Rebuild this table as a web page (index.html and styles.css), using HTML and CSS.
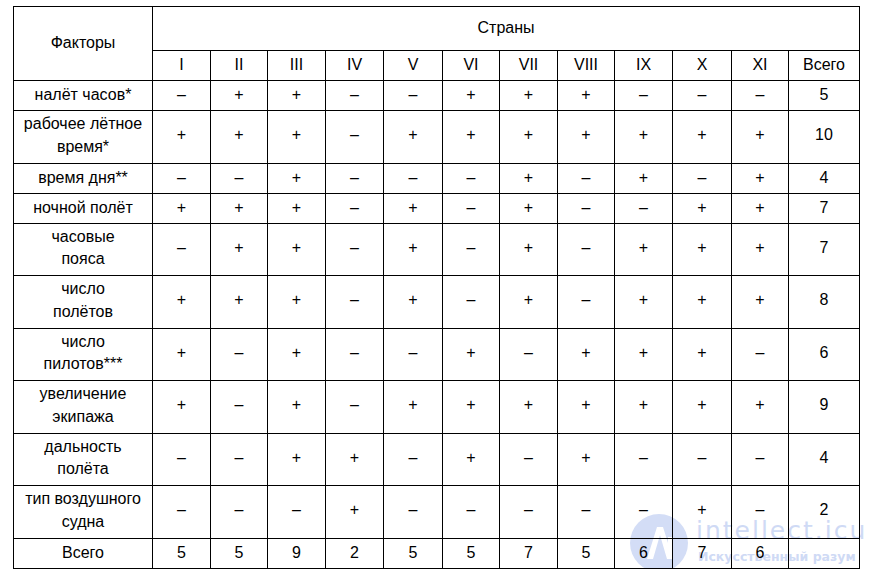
FILE: index.html
```html
<!DOCTYPE html>
<html lang="ru">
<head>
<meta charset="utf-8">
<title>Факторы</title>
<link rel="stylesheet" href="styles.css">
</head>
<body>
<div class="page">
  <table class="grid">
    <colgroup>
      <col class="c-f"><col class="c58"><col class="c57"><col class="c58"><col class="c58"><col class="c59"><col class="c57"><col class="c58"><col class="c57"><col class="c58"><col class="c59"><col class="c57"><col class="c-t">
    </colgroup>
    <thead>
      <tr class="h1"><th rowspan="2">Факторы</th><th colspan="12">Страны</th></tr>
      <tr class="r1"><th>I</th><th>II</th><th>III</th><th>IV</th><th>V</th><th>VI</th><th>VII</th><th>VIII</th><th>IX</th><th>X</th><th>XI</th><th>Всего</th></tr>
    </thead>
    <tbody>
      <tr class="r1"><td>налёт часов*</td><td>–</td><td>+</td><td>+</td><td>–</td><td>–</td><td>+</td><td>+</td><td>+</td><td>–</td><td>–</td><td>–</td><td>5</td></tr>
      <tr class="r2"><td>рабочее лётное время*</td><td>+</td><td>+</td><td>+</td><td>–</td><td>+</td><td>+</td><td>+</td><td>+</td><td>+</td><td>+</td><td>+</td><td>10</td></tr>
      <tr class="r1"><td>время дня**</td><td>–</td><td>–</td><td>+</td><td>–</td><td>–</td><td>–</td><td>+</td><td>–</td><td>+</td><td>–</td><td>+</td><td>4</td></tr>
      <tr class="r1"><td>ночной полёт</td><td>+</td><td>+</td><td>+</td><td>–</td><td>+</td><td>–</td><td>+</td><td>–</td><td>–</td><td>+</td><td>+</td><td>7</td></tr>
      <tr class="r2"><td>часовые<br>пояса</td><td>–</td><td>+</td><td>+</td><td>–</td><td>+</td><td>–</td><td>+</td><td>–</td><td>+</td><td>+</td><td>+</td><td>7</td></tr>
      <tr class="r2"><td>число<br>полётов</td><td>+</td><td>+</td><td>+</td><td>–</td><td>+</td><td>–</td><td>+</td><td>–</td><td>+</td><td>+</td><td>+</td><td>8</td></tr>
      <tr class="r2"><td>число<br>пилотов***</td><td>+</td><td>–</td><td>+</td><td>–</td><td>–</td><td>+</td><td>–</td><td>+</td><td>+</td><td>+</td><td>–</td><td>6</td></tr>
      <tr class="r2"><td>увеличение<br>экипажа</td><td>+</td><td>–</td><td>+</td><td>–</td><td>+</td><td>+</td><td>+</td><td>+</td><td>+</td><td>+</td><td>+</td><td>9</td></tr>
      <tr class="r2"><td>дальность<br>полёта</td><td>–</td><td>–</td><td>+</td><td>+</td><td>–</td><td>+</td><td>–</td><td>+</td><td>–</td><td>–</td><td>–</td><td>4</td></tr>
      <tr class="r2"><td>тип воздушного<br>судна</td><td>–</td><td>–</td><td>–</td><td>+</td><td>–</td><td>–</td><td>–</td><td>–</td><td>–</td><td>+</td><td>–</td><td>2</td></tr>
      <tr class="r1"><td>Всего</td><td>5</td><td>5</td><td>9</td><td>2</td><td>5</td><td>5</td><td>7</td><td>5</td><td>6</td><td>7</td><td>6</td><td></td></tr>
    </tbody>
  </table>
  <div class="watermark" aria-hidden="true">
    <svg class="wm-logo" width="58" height="60" viewBox="0 0 58 60">
      <circle cx="29" cy="30" r="29" fill="#d3ddf6"/>
      <path d="M17 46 L27 14 L33 14 L43 46 L37 46 L30 22 L23 46 Z" fill="#ffffff"/>
      <rect x="38" y="24" width="5" height="22" fill="#ffffff"/>
    </svg>
    <div class="wm-text">
      <span class="wm-big">intellect.icu</span>
      <span class="wm-small">Искусственный разум</span>
    </div>
  </div>
</div>
</body>
</html>
```
FILE: styles.css
```css
html, body {
  margin: 0;
  padding: 0;
  background: #ffffff;
}
.page {
  position: relative;
  padding: 6px 0 0 13px;
  font-family: "Liberation Sans", Arial, sans-serif;
  font-size: 16px;
  color: #000;
}
.grid {
  position: relative;
  z-index: 1;
  border-collapse: collapse;
  table-layout: fixed;
  width: 847px;
  background: transparent;
}
.c-f { width: 139px; }
.c57 { width: 57px; }
.c58 { width: 58px; }
.c59 { width: 59px; }
.c-t { width: 71px; }
.grid th, .grid td {
  border: 1px solid #000;
  font-weight: normal;
  text-align: center;
  vertical-align: middle;
  line-height: 23px;
  padding: 2px 1px 4px;
}
.grid tr.h1 th { height: 37px; }
.grid tr.r1 td, .grid tr.r1 th { height: 23px; }
.grid tr.r2 td { height: 45.5px; line-height: 22.75px; }
.watermark {
  position: absolute;
  left: 630px;
  top: 513px;
  display: flex;
  align-items: flex-start;
  gap: 8px;
  z-index: 0;
}
.wm-logo { display: block; }
.wm-text {
  display: flex;
  flex-direction: column;
  padding-top: 5px;
  font-family: "DejaVu Sans", sans-serif;
  color: #cfdaf5;
  line-height: 1;
}
.wm-big {
  font-size: 25px;
  letter-spacing: 2px;
}
.wm-small {
  font-size: 12.5px;
  font-weight: bold;
  margin-top: 8px;
  margin-left: 2px;
}
```
